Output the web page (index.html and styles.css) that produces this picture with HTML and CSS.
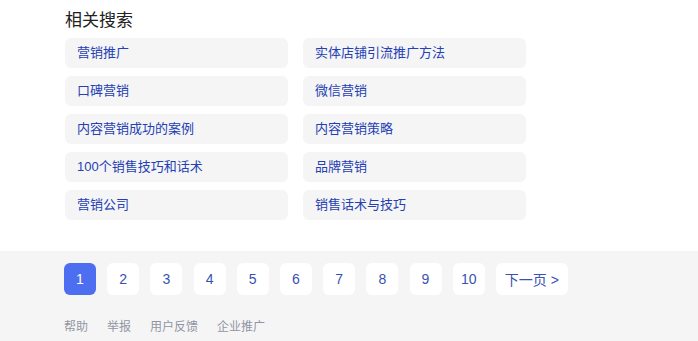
FILE: index.html
```html
<!DOCTYPE html>
<html>
<head>
  <link rel="stylesheet" href="styles.css">
</head>
<body>
  <div class="related">
    <h3 class="related-title">相关搜索</h3>
    <div class="related-grid">
      <a class="related-item">营销推广</a>
      <a class="related-item">实体店铺引流推广方法</a>
      <a class="related-item">口碑营销</a>
      <a class="related-item">微信营销</a>
      <a class="related-item">内容营销成功的案例</a>
      <a class="related-item">内容营销策略</a>
      <a class="related-item">100个销售技巧和话术</a>
      <a class="related-item">品牌营销</a>
      <a class="related-item">营销公司</a>
      <a class="related-item">销售话术与技巧</a>
    </div>
  </div>

  <div class="foot">
    <div class="pager">
      <span class="page current">1</span>
      <a class="page">2</a>
      <a class="page">3</a>
      <a class="page">4</a>
      <a class="page">5</a>
      <a class="page">6</a>
      <a class="page">7</a>
      <a class="page">8</a>
      <a class="page">9</a>
      <a class="page">10</a>
      <a class="page next">下一页 &gt;</a>
    </div>
    <div class="foot-links">
      <a>帮助</a>
      <a>举报</a>
      <a>用户反馈</a>
      <a>企业推广</a>
    </div>
  </div>
</body>
</html>
```

FILE: styles.css
```css
body {
  margin: 0;
  font-family: "Liberation Sans", Arial, "Noto Sans CJK SC", sans-serif;
  background-color: #ffffff;
}

a {
  cursor: pointer;
}

.related {
  padding: 10px 0 31px 65px;
}

.related-title {
  margin: 0 0 6px 0;
  font-size: 17px;
  line-height: 22px;
  font-weight: normal;
  color: #222222;
}

.related-grid {
  display: grid;
  grid-template-columns: 223px 223px;
  grid-auto-rows: 30px;
  column-gap: 15px;
  row-gap: 8px;
}

.related-item {
  display: flex;
  align-items: center;
  padding: 0 0 3px 12px;
  background-color: #f5f5f6;
  border-radius: 6px;
  font-size: 13px;
  color: #2440b3;
}

.foot {
  background-color: #f5f5f6;
  padding: 12px 0 20px 64px;
}

.pager {
  display: flex;
  gap: 11.2px;
}

.page {
  width: 32px;
  height: 32px;
  display: flex;
  align-items: center;
  justify-content: center;
  background-color: #ffffff;
  border-radius: 6px;
  font-size: 14px;
  color: #3951b3;
}

.page.current {
  background-color: #4e6ef2;
  color: #ffffff;
}

.page.next {
  width: 72px;
}

.foot-links {
  display: flex;
  gap: 19px;
  margin-top: 23px;
  font-size: 12px;
  line-height: 18px;
  color: #9195a3;
}
```
